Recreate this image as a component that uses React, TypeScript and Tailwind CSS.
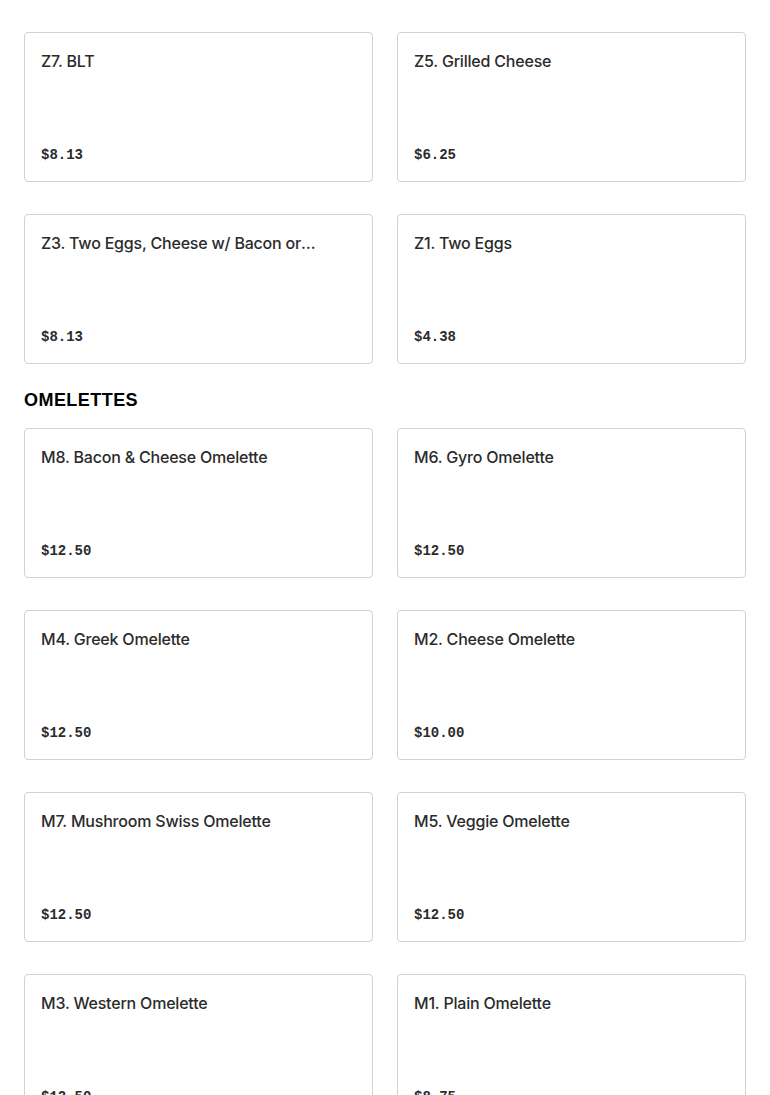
const sections = [
  {
    title: '',
    items: [
      { name: 'Z7. BLT', price: '$8.13' },
      { name: 'Z5. Grilled Cheese', price: '$6.25' },
      { name: 'Z3. Two Eggs, Cheese w/ Bacon or Sausage', price: '$8.13' },
      { name: 'Z1. Two Eggs', price: '$4.38' },
    ],
  },
  {
    title: 'OMELETTES',
    items: [
      { name: 'M8. Bacon & Cheese Omelette', price: '$12.50' },
      { name: 'M6. Gyro Omelette', price: '$12.50' },
      { name: 'M4. Greek Omelette', price: '$12.50' },
      { name: 'M2. Cheese Omelette', price: '$10.00' },
      { name: 'M7. Mushroom Swiss Omelette', price: '$12.50' },
      { name: 'M5. Veggie Omelette', price: '$12.50' },
      { name: 'M3. Western Omelette', price: '$12.50' },
      { name: 'M1. Plain Omelette', price: '$8.75' },
    ],
  },
];

function ItemCard({ name, price }: { name: string; price: string }) {
  return (
    <div className="h-[150px] flex flex-col justify-between rounded border border-[#d2d2d2] bg-white p-4">
      <h3 className="line-clamp-1 break-words text-[16px] leading-6 font-medium tracking-[-0.2px] text-[#2b2b2b] font-['Inter',sans-serif]">
        {name}
      </h3>
      <p className="text-[14px] leading-5 font-bold text-[#2b2b2b] font-['Liberation_Mono',monospace]">{price}</p>
    </div>
  );
}

export default function App() {
  return (
    <div className="min-h-screen bg-white px-6 pt-8 pb-10">
      {sections.map((section, i) => (
        <div key={i}>
          {section.title && (
            <h2 className="pt-6 pb-4 text-[18px] leading-6 font-black tracking-wide text-black font-['Liberation_Sans',sans-serif]">
              {section.title}
            </h2>
          )}
          <div className="grid grid-cols-2 gap-x-6 gap-y-8">
            {section.items.map((item) => (
              <ItemCard key={item.name} name={item.name} price={item.price} />
            ))}
          </div>
        </div>
      ))}
    </div>
  );
}
